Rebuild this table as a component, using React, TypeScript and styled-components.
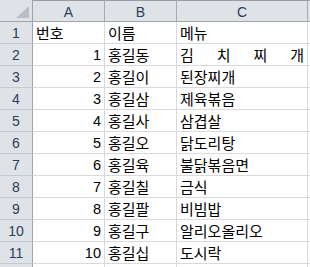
import React from 'react';
import styled, { createGlobalStyle } from 'styled-components';

const GlobalStyle = createGlobalStyle`
  html, body {
    margin: 0;
    padding: 0;
    background: #ffffff;
    overflow: hidden;
  }
`;

const Sheet = styled.div`
  display: grid;
  grid-template-columns: 33px 72px 72px 131px 1fr;
  grid-template-rows: 22px;
  grid-auto-rows: 22px;
  width: 310px;
  height: 267px;
  overflow: hidden;
  font-family: 'Noto Sans CJK KR', 'Liberation Sans', sans-serif;
`;

const Corner = styled.div`
  display: flex;
  align-items: flex-end;
  justify-content: flex-end;
  padding: 0 3px 3px 0;
  background: #dfe3e8;
  border-right: 1px solid #9ea4ab;
  border-bottom: 1px solid #9ea4ab;
  box-sizing: border-box;
`;

const Triangle = styled.div`
  width: 0;
  height: 0;
  border-left: 13px solid transparent;
  border-bottom: 12px solid #b9bfc7;
`;

const ColHead = styled.div`
  display: flex;
  align-items: center;
  justify-content: center;
  background: #dfe3e8;
  border-top: 1px solid #9a9ea4;
  border-right: 1px solid #a7acb3;
  border-bottom: 1px solid #9ea4ab;
  box-sizing: border-box;
  color: #27405e;
  font-family: 'Liberation Sans', sans-serif;
  font-size: 14px;
  padding-top: 1px;
`;

const RowHead = styled.div`
  display: flex;
  align-items: center;
  justify-content: center;
  background: #dfe3e8;
  border-right: 1px solid #9ea4ab;
  border-bottom: 1px solid #c5cad1;
  box-sizing: border-box;
  color: #27405e;
  font-family: 'Liberation Sans', sans-serif;
  font-size: 14px;
`;

const Cell = styled.div<{ $align?: 'left' | 'right'; $num?: boolean }>`
  display: flex;
  align-items: center;
  justify-content: ${(p) => (p.$align === 'right' ? 'flex-end' : 'flex-start')};
  border-right: 1px solid #d9d9d9;
  border-bottom: 1px solid #d9d9d9;
  box-sizing: border-box;
  padding: 0 3px 0 3px;
  color: #000000;
  font-size: ${(p) => (p.$num ? '14.5px' : '15px')};
  font-family: ${(p) =>
    p.$num ? "'Liberation Sans', sans-serif" : "'Noto Sans CJK KR', sans-serif"};
  white-space: nowrap;
  overflow: hidden;
`;

const Spread = styled.span`
  display: flex;
  justify-content: space-between;
  width: 100%;
`;

const rows = [
  { no: '1', name: '홍길동', menu: '김치찌개', spread: true },
  { no: '2', name: '홍길이', menu: '된장찌개' },
  { no: '3', name: '홍길삼', menu: '제육볶음' },
  { no: '4', name: '홍길사', menu: '삼겹살' },
  { no: '5', name: '홍길오', menu: '닭도리탕' },
  { no: '6', name: '홍길육', menu: '불닭볶음면' },
  { no: '7', name: '홍길칠', menu: '금식' },
  { no: '8', name: '홍길팔', menu: '비빔밥' },
  { no: '9', name: '홍길구', menu: '알리오올리오' },
  { no: '10', name: '홍길십', menu: '도시락' },
];

const App: React.FC = () => {
  return (
    <>
      <GlobalStyle />
      <Sheet>
        <Corner>
          <Triangle />
        </Corner>
        <ColHead>A</ColHead>
        <ColHead>B</ColHead>
        <ColHead>C</ColHead>
        <ColHead />

        <RowHead>1</RowHead>
        <Cell>번호</Cell>
        <Cell>이름</Cell>
        <Cell>메뉴</Cell>
        <Cell />

        {rows.map((r, i) => (
          <React.Fragment key={r.no}>
            <RowHead>{i + 2}</RowHead>
            <Cell $align="right" $num>
              {r.no}
            </Cell>
            <Cell>{r.name}</Cell>
            <Cell>
              {r.spread ? (
                <Spread>
                  {r.menu.split('').map((ch) => (
                    <span key={ch}>{ch}</span>
                  ))}
                </Spread>
              ) : (
                r.menu
              )}
            </Cell>
            <Cell />
          </React.Fragment>
        ))}

        {/* row 12 is only a sliver at the bottom edge, its label is out of view */}
        <RowHead />
        <Cell />
        <Cell />
        <Cell />
        <Cell />
      </Sheet>
    </>
  );
};

export default App;
